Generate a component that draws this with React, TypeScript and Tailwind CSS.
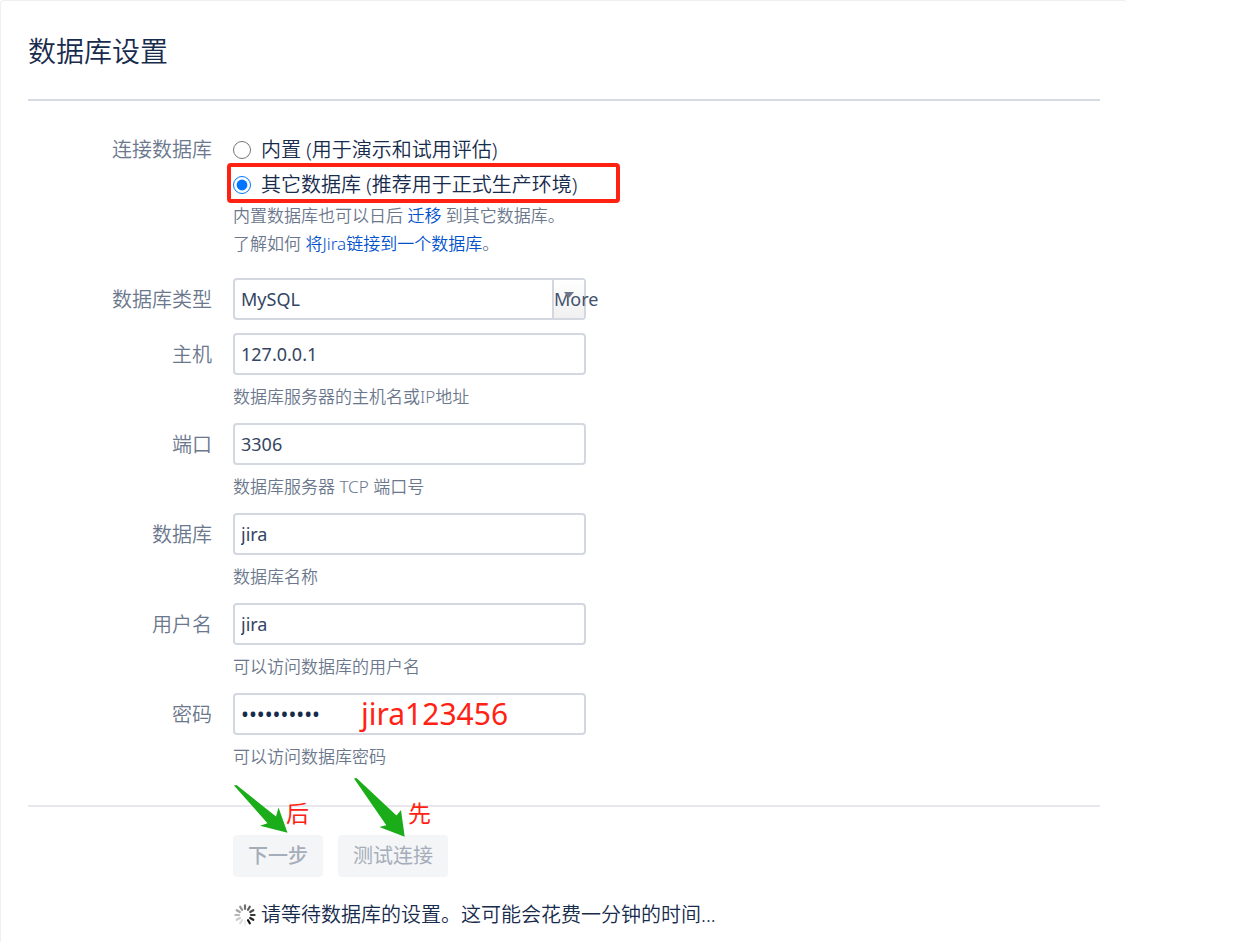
import React, { useState } from "react";

const INPUT =
  "block h-[42px] w-full rounded border-2 border-[#d3d7df] bg-white px-1.5 text-[18px] font-normal leading-6 text-[#344563] outline-none focus:border-[#4c9aff]";

type RowProps = {
  label: string;
  htmlFor: string;
  hint?: string;
  children: React.ReactNode;
};

function Row({ label, htmlFor, hint, children }: RowProps) {
  return (
    <div className="flex gap-[21px]">
      <label htmlFor={htmlFor} className="h-[42px] w-[184px] shrink-0 text-right text-[20px] leading-[43px] text-[#6b778c]">
        {label}
      </label>
      <div className="w-full max-w-[353px]">
        {children}
        {hint && <p className="mt-2 text-[17px] leading-7 text-[#6b778c]">{hint}</p>}
      </div>
    </div>
  );
}

function Spinner() {
  const spokes = Array.from({ length: 12 }, (_, i) => i);
  return (
    <svg viewBox="0 0 24 24" className="h-6 w-6 shrink-0" aria-hidden="true">
      {spokes.map((i) => (
        <line
          key={i}
          x1="12"
          y1="6"
          x2="12"
          y2="2.4"
          stroke="#111"
          strokeWidth="2.2"
          strokeLinecap="round"
          opacity={i <= 5 ? 0.6 + i * 0.08 : 0.06 + (i - 6) * 0.08}
          transform={`rotate(${i * 30} 12 12)`}
        />
      ))}
    </svg>
  );
}

export default function App() {
  const [mode, setMode] = useState("external");
  return (
    <div className="bg-white font-['Noto_Sans','Noto_Sans_CJK_SC',sans-serif] font-[350] text-[#172b4d]">
      <main className="min-h-screen w-full max-w-[1127px] rounded-t border-l border-t border-[#f0f0f2] px-[27px] pb-3">
        <h1 className="pt-[30px] text-[28px] font-[350] leading-10">数据库设置</h1>
        <form onSubmit={(e) => e.preventDefault()} className="mt-7 border-t-2 border-[#d6dae2] pt-[31px]">
          <fieldset className="flex gap-[21px]">
            <legend className="float-left w-[184px] shrink-0 text-right text-[20px] leading-[35px] text-[#6b778c]">
              连接数据库
            </legend>
            <div className="text-[20px] leading-[35px]">
              <label className="flex items-center gap-2.5">
                <input
                  type="radio"
                  name="mode"
                  className="h-[18px] w-[18px] accent-[#0075ff]"
                  checked={mode === "builtin"}
                  onChange={() => setMode("builtin")}
                />
                内置 (用于演示和试用评估)
              </label>
              <div className="relative">
                <label className="flex items-center gap-2.5">
                  <input
                    type="radio"
                    name="mode"
                    className="h-[18px] w-[18px] accent-[#0075ff]"
                    checked={mode === "external"}
                    onChange={() => setMode("external")}
                  />
                  其它数据库 (推荐用于正式生产环境)
                </label>
                <div className="pointer-events-none absolute -left-1.5 -top-1 h-10 w-[393px] rounded border-4 border-[#ff2213]" />
              </div>
              <p className="text-[17px] leading-7 text-[#6b778c]">
                内置数据库也可以日后{" "}
                <a href="#migrate" className="text-[#0052cc]">
                  迁移
                </a>{" "}
                到其它数据库。
              </p>
              <p className="text-[17px] leading-7 text-[#6b778c]">
                了解如何{" "}
                <a href="#connect" className="text-[#0052cc]">
                  将Jira链接到一个数据库
                </a>
                。
              </p>
            </div>
          </fieldset>

          <div className="mt-5">
            <Row label="数据库类型" htmlFor="db-type">
              <div className="relative">
                <select id="db-type" className={`${INPUT} appearance-none`}>
                  <option>MySQL</option>
                </select>
                <div
                  aria-hidden="true"
                  className="pointer-events-none absolute bottom-0.5 right-0.5 top-0.5 flex w-8 items-center border-l-2 border-[#d3d7df] bg-linear-to-b from-white to-[#f0f0f0] text-[18px] font-normal text-[#42526e]"
                >
                  <svg viewBox="0 0 10 6" className="absolute left-2.5 top-3 h-1.5 w-2.5">
                    <path d="M0 0h10L5 6z" fill="#6b778c" />
                  </svg>
                  <span>More</span>
                </div>
              </div>
            </Row>
          </div>
          <div className="mt-[13px] flex flex-col gap-3">
            <Row label="主机" htmlFor="host" hint="数据库服务器的主机名或IP地址">
              <input id="host" className={INPUT} defaultValue="127.0.0.1" />
            </Row>
            <Row label="端口" htmlFor="port" hint="数据库服务器 TCP 端口号">
              <input id="port" className={INPUT} defaultValue="3306" />
            </Row>
            <Row label="数据库" htmlFor="database" hint="数据库名称">
              <input id="database" className={INPUT} defaultValue="jira" />
            </Row>
            <Row label="用户名" htmlFor="username" hint="可以访问数据库的用户名">
              <input id="username" className={INPUT} defaultValue="jira" />
            </Row>
            <Row label="密码" htmlFor="password" hint="可以访问数据库密码">
              <div className="relative">
                <input
                  id="password"
                  type="password"
                  className="block h-[42px] w-full rounded border-2 border-[#d3d7df] bg-white px-1.5 text-[21px] font-normal leading-6 text-[#172b4d] outline-none focus:border-[#4c9aff]"
                  defaultValue="jira123456"
                />
                <span className="pointer-events-none absolute left-32 top-0 text-[30px] font-normal leading-[42px] text-[#ff2213]">
                  jira123456
                </span>
              </div>
            </Row>
          </div>

          <div className="mt-[34px] border-t-2 border-[#e6e8ed] pl-[205px] pt-7">
            <div className="relative flex gap-[15px]">
              <button
                type="submit"
                disabled
                className="h-[42px] rounded bg-[#f4f5f7] px-[15px] text-[20px] font-medium leading-[42px] text-[#a5adba]"
              >
                下一步
              </button>
              <button
                type="button"
                disabled
                className="h-[42px] rounded bg-[#f4f5f7] px-[15px] text-[20px] font-normal leading-[42px] text-[#a5adba]"
              >
                测试连接
              </button>
              <div className="pointer-events-none absolute bottom-10 left-0 h-[60px] w-[210px]">
                <svg viewBox="0 0 210 60" className="h-full w-full" aria-hidden="true">
                  <path
                    d="M1 8.5L3.5 8L43 39.5L45.5 30.5L54.5 55.7L27 48.7L34.5 46.3Z"
                    fill="#1aad19"
                  />
                  <path
                    d="M121 1.5L123.5 1L163.5 38.5L168 33L171.7 59.7L146.3 50L153.3 48.3Z"
                    fill="#1aad19"
                  />
                </svg>
                <span className="absolute left-[53px] top-5 text-[23px] font-normal leading-8 text-[#ff2213]">后</span>
                <span className="absolute left-[175px] top-5 text-[23px] font-normal leading-8 text-[#ff2213]">先</span>
              </div>
            </div>
            <p role="status" className="mt-6 flex items-center gap-1 text-[20px] leading-7">
              <Spinner />
              请等待数据库的设置。这可能会花费一分钟的时间...
            </p>
          </div>
        </form>
      </main>
    </div>
  );
}
